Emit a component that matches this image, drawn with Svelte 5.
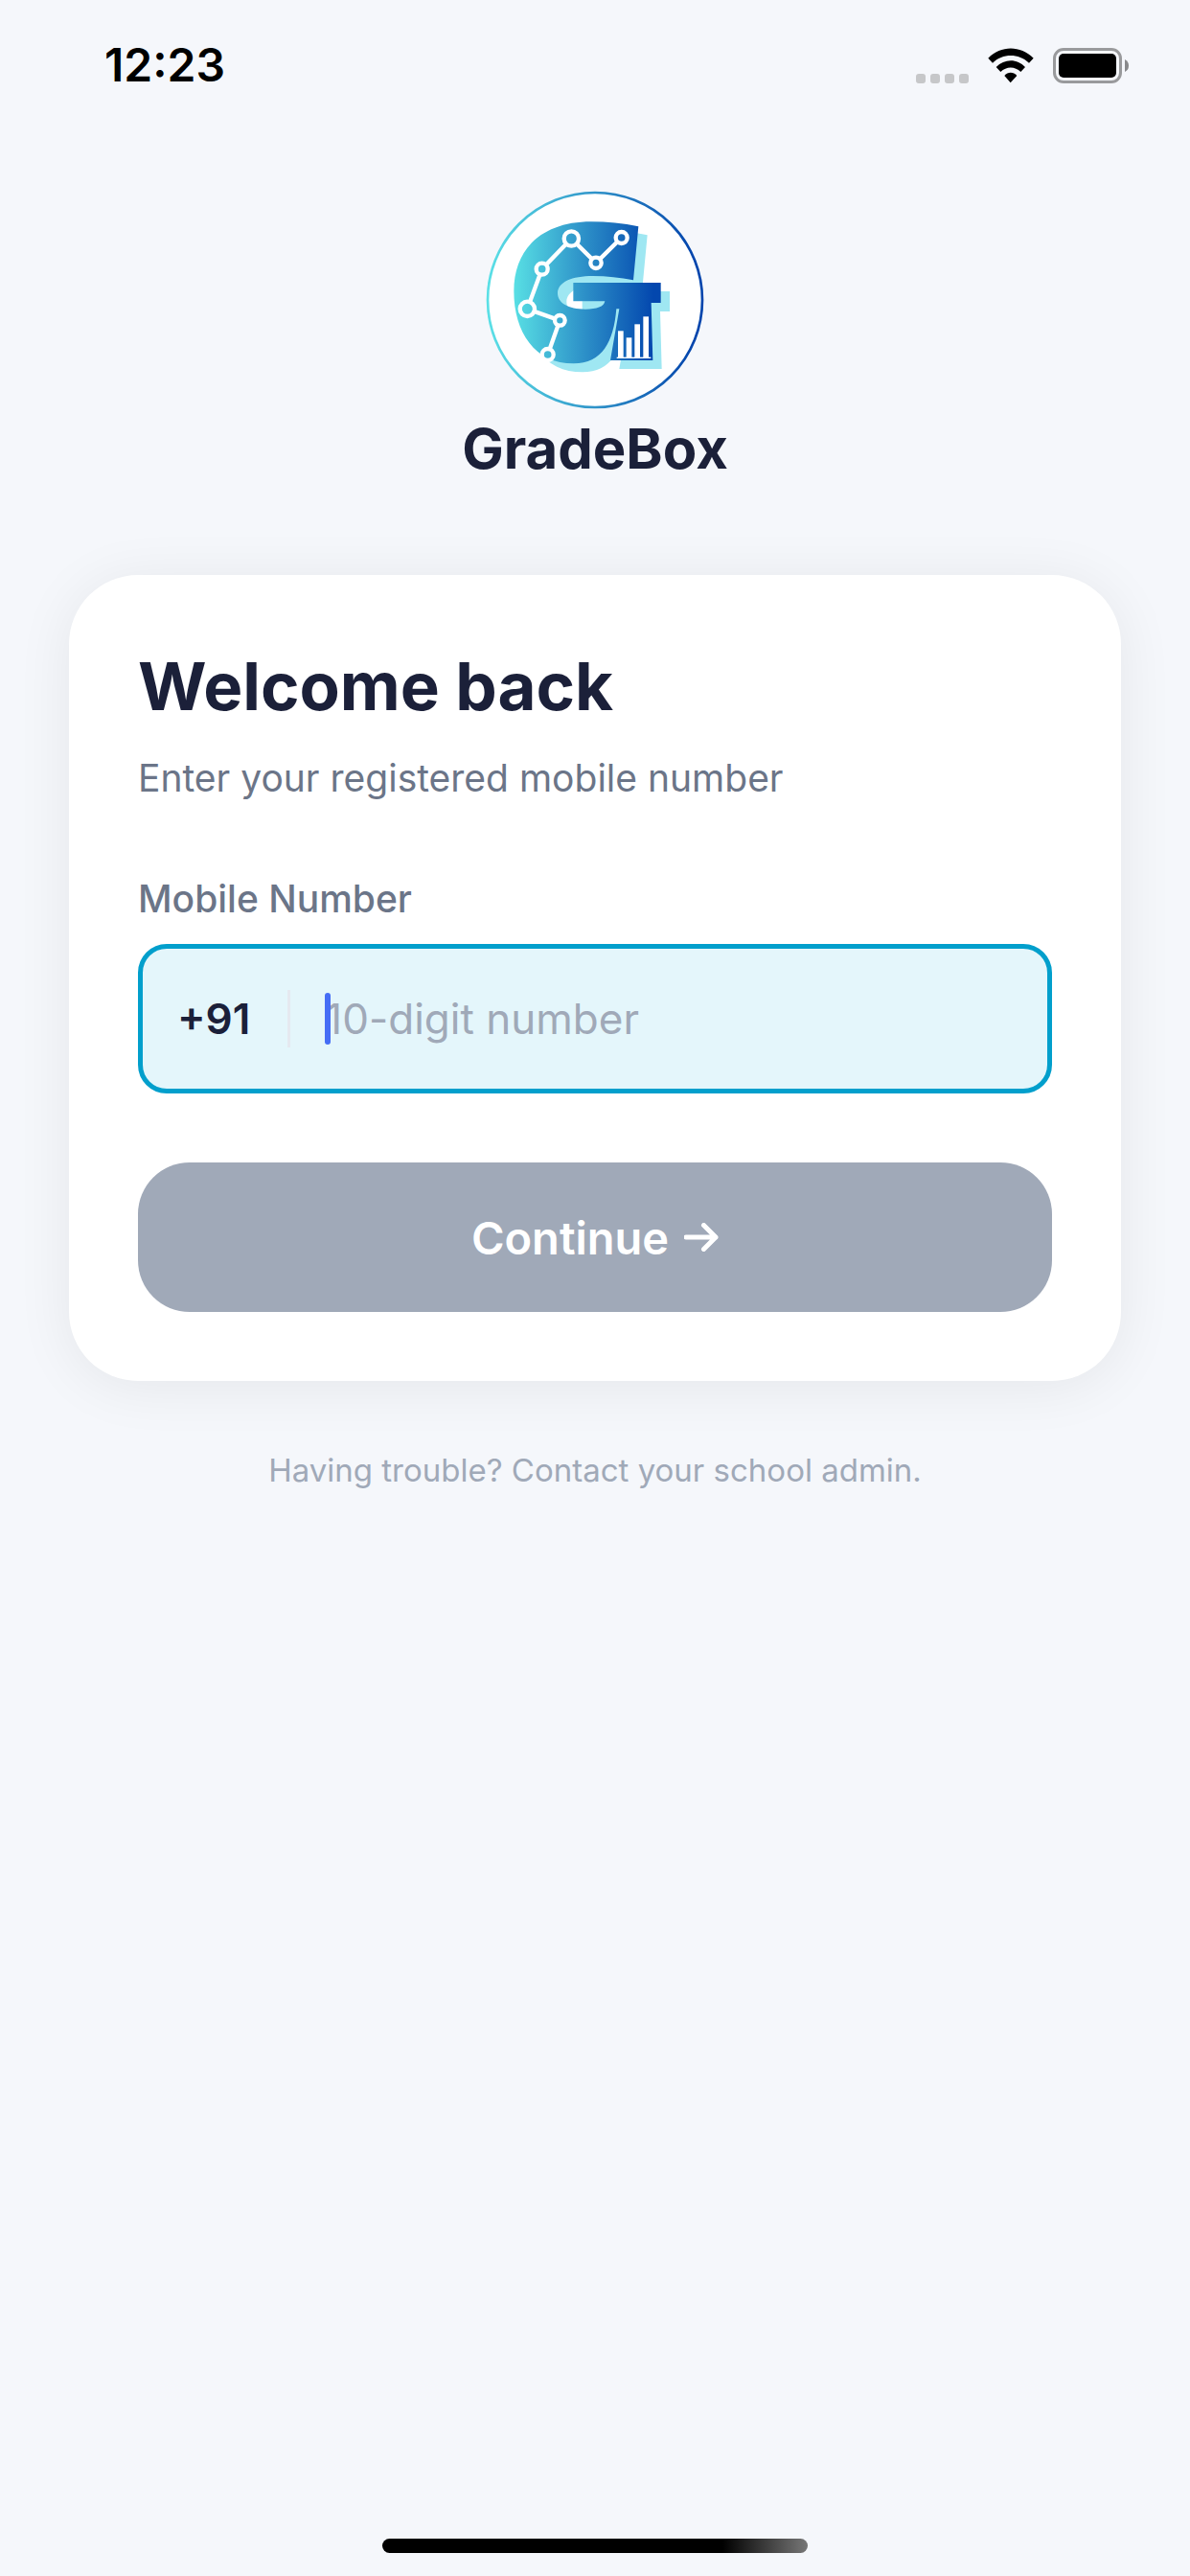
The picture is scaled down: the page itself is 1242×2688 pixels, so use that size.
<script lang="ts">

let mobile : string = '';
let countryCode = '+91';

const signalDots = [0, 1, 2, 3];

// the line over the G, joint by joint
const nodes = [
  { x: 475, y: 173, r: 18 },
  { x: 395, y: 252, r: 17 },
  { x: 318, y: 176, r: 23 },
  { x: 226, y: 271, r: 18 },
  { x: 180, y: 396, r: 23 },
  { x: 282, y: 432, r: 16 },
  { x: 244, y: 539, r: 18 }
];

const bars = [
  { x: 464, y: 465 },
  { x: 490, y: 486 },
  { x: 516, y: 444 },
  { x: 543, y: 420 }
];

const letterPath = 'M528 138 Q455 123 380 123 C230 123 138 205 138 340 C138 470 205 567 325 567 C415 567 450 500 459 396 L468 396 L440 557 L573 557 L568 377 L598 377 L598 314 L324 314 L324 372 L423 372 C420 389 398 397 362 397 C308 397 275 377 275 347 C275 312 320 293 385 293 C430 293 470 298 512 306 Z';

$: linePoints = nodes.map(n => n.x + ',' + n.y).join(' ');

function onlyDigits() {
  mobile = mobile.replace(/\D/g, '').slice(0, 10);
}
</script>

<div class="screen">
  <header class="status-bar">
    <time class="clock">12:23</time>
    <div class="status-icons">
      <div class="signal">
        {#each signalDots as dot}
          <span class="dot"></span>
        {/each}
      </div>
      <svg class="wifi" viewBox="335 56 144 111" aria-hidden="true">
        <path d="M336 88 C376 47 437 47 478 88 L464 103 C432 72 381 72 350 103 Z" />
        <path d="M361 116 C387 89 427 89 452 116 L438 131 C420 113 393 113 375 131 Z" />
        <path d="M387 143 C398 130 415 130 426 143 L406 165 Z" />
      </svg>
      <svg class="battery" viewBox="0 0 80 37" aria-hidden="true">
        <rect x="1.5" y="1.5" width="69" height="34" rx="9.5" fill="none" stroke="#999a9c" stroke-width="3" />
        <rect x="6" y="6" width="60" height="25" rx="5" />
        <path d="M75 12 Q79 14 79 18.500 Q79 23 75 25 Z" fill="#88898b" />
      </svg>
    </div>
  </header>

  <main>
    <div class="brand">
      <svg class="logo" viewBox="50 26 684 684" aria-hidden="true">
        <defs>
          <linearGradient id="ring" x1="0" x2="1" y1="0" y2="0">
            <stop offset="0" stop-color="#5be0e6" />
            <stop offset="0.5" stop-color="#2f93c9" />
            <stop offset="0.95" stop-color="#0446ad" />
          </linearGradient>
          <linearGradient id="letter" gradientUnits="userSpaceOnUse" x1="138" x2="598" y1="0" y2="0">
            <stop offset="0" stop-color="#58dfe4" />
            <stop offset="0.5" stop-color="#2b8dc7" />
            <stop offset="0.95" stop-color="#0347ae" />
          </linearGradient>
        </defs>
        <circle cx="392" cy="368" r="336" fill="#fff" stroke="url(#ring)" stroke-width="8" />
        <path d={letterPath} fill="#9fe7f2" transform="translate(28 27)" />
        <path d={letterPath} fill="url(#letter)" />
        <polyline points={linePoints} fill="none" stroke="#fff" stroke-width="13" />
        {#each nodes as node}
          <circle cx={node.x} cy={node.y} r={node.r} fill="url(#letter)" stroke="#fff" stroke-width="13" />
        {/each}
        {#each bars as bar}
          <rect x={bar.x} y={bar.y} width="17" height={550 - bar.y} fill="#fff" />
        {/each}
        <rect x="460" y="547" width="107" height="4" fill="#fff" />
      </svg>
      <div class="brand-name">GradeBox</div>
    </div>

    <form class="card" on:submit|preventDefault>
      <h1>Welcome back</h1>
      <p class="subtitle">Enter your registered mobile number</p>

      <label for="mobile">Mobile Number</label>
      <div class="field">
        <span class="code">{countryCode}</span>
        <div class="input-wrap">
          <input id="mobile" type="tel" placeholder="10-digit number" bind:value={mobile} on:input={onlyDigits} />
          {#if !mobile}
            <span class="caret"></span>
          {/if}
        </div>
      </div>

      <button type="submit" disabled={mobile.length < 10}>
        Continue
        <svg class="arrow" viewBox="0 0 36 30" aria-hidden="true">
          <path d="M2 15 H33 M20.500 2.500 L33 15 L20.500 27.500" />
        </svg>
      </button>
    </form>

    <p class="help">Having trouble? Contact your school admin.</p>
  </main>

  <div class="home-indicator"></div>
</div>

<style>
  :global(body) {
      margin: 0;
      background: #f5f7fb;
  }

  .screen {
      box-sizing: border-box;
      min-height: 100vh;
      display: flex;
      flex-direction: column;
      background: #f5f7fb;
      color: #1b2039;
      font-family: Inter, "Liberation Sans", sans-serif;
  }

  .status-bar {
      display: flex;
      justify-content: space-between;
      align-items: center;
      height: 136px;
      padding: 0 63px 0 109px;
      box-sizing: border-box;
  }

  .clock {
      color: #000;
      font-size: 48px;
      font-weight: 600;
      line-height: 60px;
  }

  .status-icons {
      display: flex;
      align-items: flex-end;
      gap: 20px;
  }

  .signal {
      display: flex;
      gap: 5px;
  }

  .dot {
      width: 10px;
      height: 10px;
      border-radius: 3px;
      background: #c6c7c9;
  }

  .wifi {
      width: 48px;
      height: 37px;
  }

  .battery {
      width: 80px;
      height: 37px;
  }

  main {
      padding: 63px 72px 0;
  }

  .brand {
      display: flex;
      flex-direction: column;
      align-items: center;
      margin-bottom: 96px;
  }

  .logo {
      width: 228px;
      height: 228px;
  }

  .brand-name {
      margin-top: 5px;
      font-size: 58px;
      font-weight: 700;
      line-height: 72px;
  }

  .card {
      display: flex;
      flex-direction: column;
      padding: 72px;
      border-radius: 72px;
      background: #fff;
      box-shadow: 0 6px 60px rgba(0, 0, 0, 0.07);
  }

  h1 {
      margin: 0 0 24px;
      font-size: 69px;
      font-weight: 700;
      line-height: 88px;
  }

  .subtitle {
      margin: 0 0 72px;
      color: #6b7588;
      font-size: 39px;
      line-height: 56px;
  }

  label {
      margin-bottom: 21px;
      color: #6b7588;
      font-size: 39px;
      font-weight: 500;
      line-height: 52px;
  }

  .field {
      box-sizing: border-box;
      height: 156px;
      display: flex;
      align-items: center;
      padding: 0 36px;
      border: 5px solid #029fcc;
      border-radius: 30px;
      background: #e4f6fb;
      font-size: 44px;
  }

  .code {
      padding-right: 39px;
      border-right: 3px solid #e5e9f0;
      font-weight: 600;
      line-height: 60px;
  }

  .input-wrap {
      position: relative;
      flex: 1;
      margin-left: 36px;
  }

  input {
      width: 100%;
      box-sizing: border-box;
      padding: 0;
      border: 0;
      outline: 0;
      background: transparent;
      color: #1b2039;
      font-family: inherit;
      font-size: 44px;
      line-height: 60px;
  }

  input::placeholder {
      color: #a0a9b8;
      opacity: 1;
  }

  .caret {
      position: absolute;
      top: 3px;
      left: 0;
      width: 6px;
      height: 54px;
      border-radius: 3px;
      background: #456df5;
  }

  button {
      display: flex;
      align-items: center;
      justify-content: center;
      gap: 16px;
      height: 156px;
      margin-top: 72px;
      border: 0;
      border-radius: 54px;
      background: #a0a9b8;
      color: #fff;
      font-family: inherit;
      font-size: 47px;
      font-weight: 600;
  }

  .arrow {
      width: 36px;
      height: 30px;
      fill: none;
      stroke: #fff;
      stroke-width: 5;
      stroke-linecap: round;
      stroke-linejoin: round;
  }

  .help {
      margin: 72px 0;
      color: #a0a9b8;
      font-size: 33px;
      line-height: 42px;
      text-align: center;
  }

  .home-indicator {
      width: 444px;
      height: 15px;
      margin: auto auto 24px;
      border-radius: 8px;
      background: linear-gradient(to right, #000 80%, #777);
  }
</style>
